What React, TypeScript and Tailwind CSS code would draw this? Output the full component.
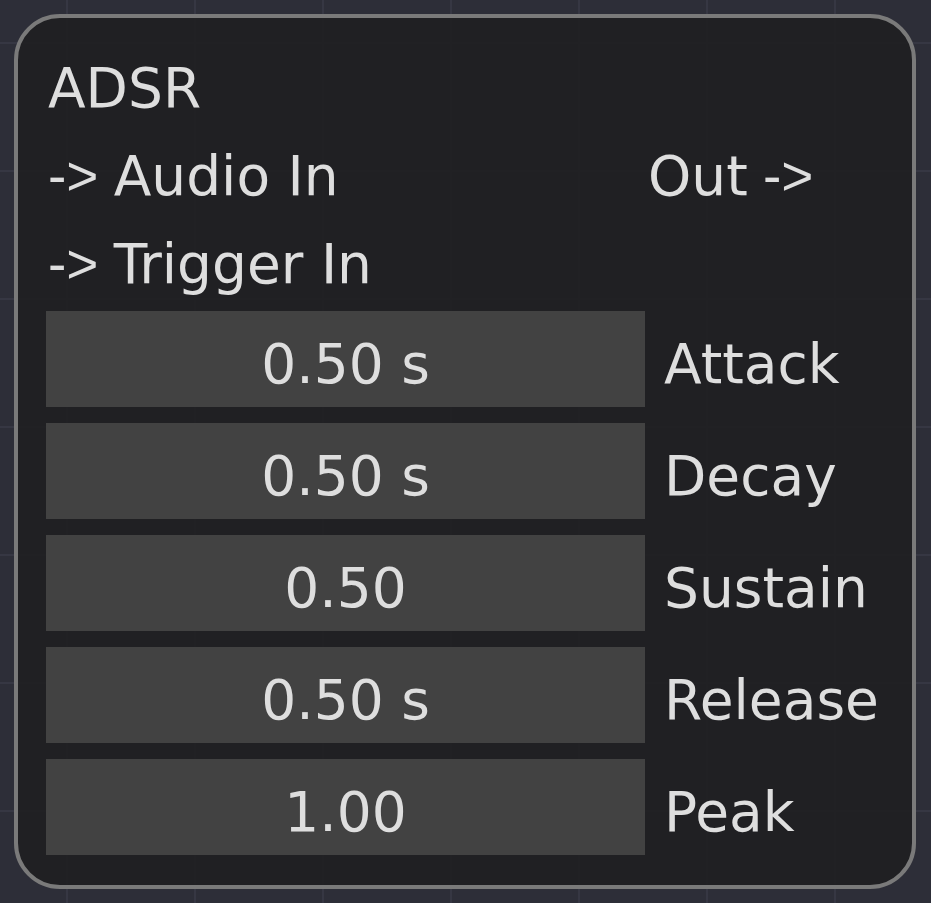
const rows = [
  { value: "0.50 s", label: "Attack" },
  { value: "0.50 s", label: "Decay" },
  { value: "0.50", label: "Sustain" },
  { value: "0.50 s", label: "Release" },
  { value: "1.00", label: "Peak" },
]

export default function App() {
  return (
    <div className="min-h-screen w-full bg-[#2d2e38] bg-[linear-gradient(to_right,#363743_2px,transparent_2px),linear-gradient(to_bottom,#363743_2px,transparent_2px)] bg-[size:128px_128px] bg-[position:66px_42px] p-[14px] font-['DejaVu_Sans',sans-serif] text-[55px] text-[#dedede]">
      <div className="w-[902px] h-[875px] rounded-[46px] border-[4px] border-[#7a7a7a] bg-[#1f1f21]/90 px-[28px] pt-[26px]">
        <div className="leading-[88px] pl-[2px]">ADSR</div>
        <div className="grid grid-cols-[602px_1fr] leading-[88px]">
          <div className="pl-[2px]">
            <span className="font-['Liberation_Sans',sans-serif]">-&gt; </span>Audio In
          </div>
          <div>
            Out<span className="font-['Liberation_Sans',sans-serif]"> -&gt;</span>
          </div>
        </div>
        <div className="leading-[88px] pl-[2px]">
          <span className="font-['Liberation_Sans',sans-serif]">-&gt; </span>Trigger In
        </div>

        <div className="mt-[3px] flex flex-col gap-[16px]">
          {rows.map((r) => (
            <div key={r.label} className="flex h-[96px]">
              <div className="w-[599px] h-[96px] bg-[#444444]/95 pt-[10px] leading-[86px] text-center">
                {r.value}
              </div>
              <div className="pl-[19px] pt-[10px] leading-[86px]">{r.label}</div>
            </div>
          ))}
        </div>
      </div>
    </div>
  )
}
